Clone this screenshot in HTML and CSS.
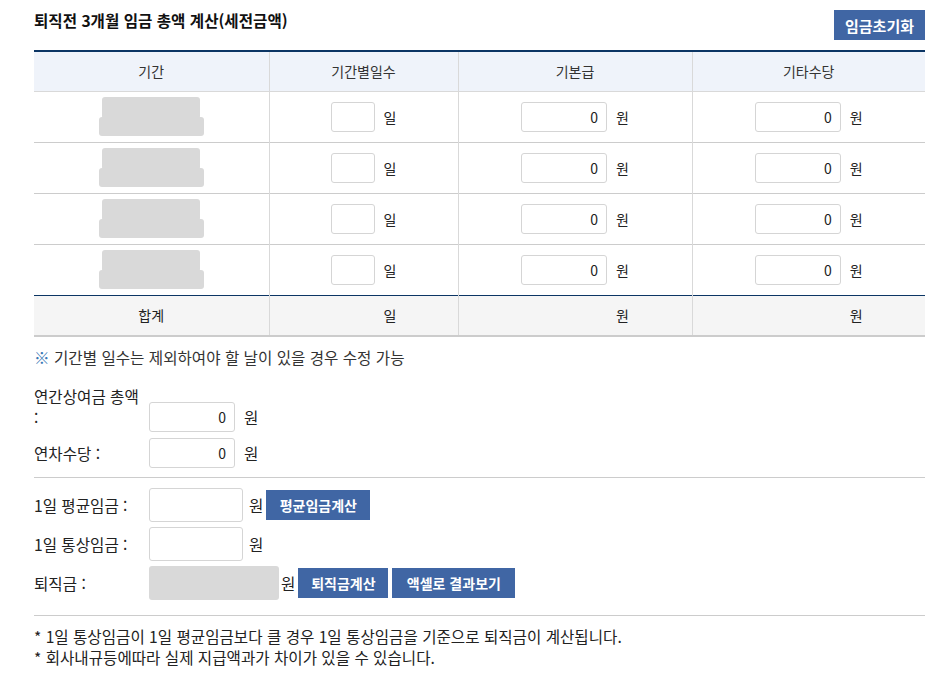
FILE: index.html
```html
<!DOCTYPE html>
<html lang="ko">
<head>
<meta charset="utf-8">
<link rel="stylesheet" href="styles.css">
</head>
<body>
<div class="wrap">
  <div class="head">
    <h2 class="title">퇴직전 3개월 임금 총액 계산(세전금액)</h2>
    <button class="btn btn-reset">임금초기화</button>
  </div>
  <table class="calc">
    <colgroup>
      <col class="c1"><col class="c2"><col class="c3"><col class="c4">
    </colgroup>
    <thead>
      <tr><th>기간</th><th>기간별일수</th><th>기본급</th><th>기타수당</th></tr>
    </thead>
    <tbody>
      <tr>
        <td><div class="ph"><span class="ph-a"></span><span class="ph-b"></span></div></td>
        <td><input class="in in-day" type="text"><span class="unit">일</span></td>
        <td><input class="in in-amt" type="text" value="0"><span class="unit">원</span></td>
        <td><input class="in in-amt" type="text" value="0"><span class="unit">원</span></td>
      </tr>
      <tr>
        <td><div class="ph"><span class="ph-a"></span><span class="ph-b"></span></div></td>
        <td><input class="in in-day" type="text"><span class="unit">일</span></td>
        <td><input class="in in-amt" type="text" value="0"><span class="unit">원</span></td>
        <td><input class="in in-amt" type="text" value="0"><span class="unit">원</span></td>
      </tr>
      <tr>
        <td><div class="ph"><span class="ph-a"></span><span class="ph-b"></span></div></td>
        <td><input class="in in-day" type="text"><span class="unit">일</span></td>
        <td><input class="in in-amt" type="text" value="0"><span class="unit">원</span></td>
        <td><input class="in in-amt" type="text" value="0"><span class="unit">원</span></td>
      </tr>
      <tr>
        <td><div class="ph"><span class="ph-a"></span><span class="ph-b"></span></div></td>
        <td><input class="in in-day" type="text"><span class="unit">일</span></td>
        <td><input class="in in-amt" type="text" value="0"><span class="unit">원</span></td>
        <td><input class="in in-amt" type="text" value="0"><span class="unit">원</span></td>
      </tr>
    </tbody>
    <tfoot>
      <tr>
        <td>합계</td>
        <td><span class="sum sum-day">일</span></td>
        <td><span class="sum sum-amt">원</span></td>
        <td><span class="sum sum-amt">원</span></td>
      </tr>
    </tfoot>
  </table>
  <p class="note"><span class="mark">※</span> 기간별 일수는 제외하여야 할 날이 있을 경우 수정 가능</p>

  <div class="form form-a">
    <div class="row row-wrap">
      <label class="lbl">연간상여금 총액 :</label>
      <div class="field"><input class="in in-b" type="text" value="0"><span class="unit">원</span></div>
    </div>
    <div class="row">
      <label class="lbl">연차수당 :</label>
      <div class="field"><input class="in in-b" type="text" value="0"><span class="unit">원</span></div>
    </div>
  </div>
  <hr class="line">
  <div class="form form-b">
    <div class="row">
      <label class="lbl">1일 평균임금 :</label>
      <input class="in in-c" type="text"><span class="unit u2">원</span>
      <button class="btn btn-sm b-avg">평균임금계산</button>
    </div>
    <div class="row">
      <label class="lbl">1일 통상임금 :</label>
      <input class="in in-c" type="text"><span class="unit u2">원</span>
    </div>
    <div class="row">
      <label class="lbl">퇴직금 :</label>
      <div class="in-gray"></div><span class="unit u3">원</span>
      <button class="btn btn-sm b-ret">퇴직금계산</button>
      <button class="btn btn-sm b-xls">액셀로 결과보기</button>
    </div>
  </div>
  <hr class="line line2">
  <ul class="foot">
    <li>* 1일 통상임금이 1일 평균임금보다 클 경우 1일 통상임금을 기준으로 퇴직금이 계산됩니다.</li>
    <li>* 회사내규등에따라 실제 지급액과가 차이가 있을 수 있습니다.</li>
  </ul>
</div>
</body>
</html>
```

FILE: styles.css
```css
* { box-sizing: border-box; }
html, body { margin: 0; padding: 0; background: #fff; }
body {
  font-family: "Noto Sans CJK KR", "Noto Sans", sans-serif;
  font-size: 15.6px;
  color: #222;
}
.wrap { width: 891px; margin-left: 34px; padding-top: 10px; }
.head { display: flex; justify-content: space-between; align-items: flex-start; height: 40px; }
.title { margin: 0; font-size: 15.6px; font-weight: bold; color: #111; line-height: 20px; }
.btn {
  font-family: inherit;
  border: 0;
  background: #4066a4;
  color: #fff;
  font-weight: bold;
  cursor: pointer;
  padding: 0;
  text-align: center;
}
.btn-reset { width: 91px; height: 30px; font-size: 15px; }
.calc { width: 891px; border-collapse: collapse; table-layout: fixed; border-top: 2px solid #0b3564; font-size: 14px; }
.c1 { width: 235px; } .c2 { width: 189px; } .c3 { width: 234px; } .c4 { width: 233px; }
.calc th {
  background: #eff3fa;
  font-weight: normal;
  color: #333;
  height: 40px;
  border-left: 1px solid #d9d9d9;
  border-bottom: 1px solid #d9d9d9;
  font-size: 14px;
}
.calc th:first-child, .calc td:first-child { border-left: 0; }
.calc tbody td {
  height: 51px;
  border-left: 1px solid #d9d9d9;
  border-top: 1px solid #cccccc;
  text-align: center;
  vertical-align: middle;
  padding: 0;
}
.calc tbody tr:first-child td { border-top: 0; }
.calc tfoot td {
  height: 41px;
  background: #f5f5f5;
  border-top: 1px solid #0b3564;
  border-bottom: 2px solid #cccccc;
  border-left: 1px solid #d9d9d9;
  text-align: center;
  color: #222;
}
.sum { display: inline-block; }
.sum-day { padding-left: 53px; }
.sum-amt { padding-left: 95px; }
.ph { position: relative; width: 105px; height: 39px; margin: 0 auto; }
.ph-a { position: absolute; left: 3px; top: 0; width: 98px; height: 22px; background: #d9d9d9; border-radius: 3px; }
.ph-b { position: absolute; left: 0; top: 20px; width: 105px; height: 19px; background: #d9d9d9; border-radius: 3px; }
.in {
  font-family: inherit;
  font-size: 14px;
  border: 1px solid #d5d5d5;
  border-radius: 3px;
  height: 30px;
  text-align: right;
  padding: 0 8px;
  color: #222;
  vertical-align: middle;
  background: #fff;
  margin: 0;
}
.in-day { width: 44px; }
.in-amt { width: 86px; }
.unit { display: inline-block; vertical-align: middle; margin-left: 9px; }
.calc .unit { font-size: 14px; }
.note { margin: 10px 0 0; line-height: 20px; color: #333; }
.mark { color: #3b78b5; }
.form { display: flex; flex-direction: column; }
.form-a { margin-top: 19px; gap: 6px; }
.row { display: flex; align-items: center; }
.row-wrap { align-items: flex-end; }
.row-wrap .lbl { line-height: 21px; margin-bottom: 4px; }
.field { display: flex; align-items: center; }
.lbl { width: 115px; flex: none; line-height: 20px; color: #222; padding-right: 7px; }
.in-b { width: 86px; height: 30px; }
.line { border: 0; border-top: 1px solid #cccccc; margin: 9px 0 10px; height: 0; }
.form-b { gap: 5px; }
.in-c { width: 94px; height: 34px; }
.u2 { margin-left: 6px; }
.btn-sm { height: 30px; font-size: 14px; margin-left: 3px; }
.b-avg { width: 104px; }
.b-ret { width: 90px; }
.b-xls { width: 123px; margin-left: 4px; }
.in-gray { width: 130px; height: 34px; background: #d9d9d9; border-radius: 3px; }
.u3 { margin-left: 2px; }
.line2 { margin: 15px 0 10px; }
.foot { list-style: none; margin: 0; padding: 0; color: #222; line-height: 21px; }
```
